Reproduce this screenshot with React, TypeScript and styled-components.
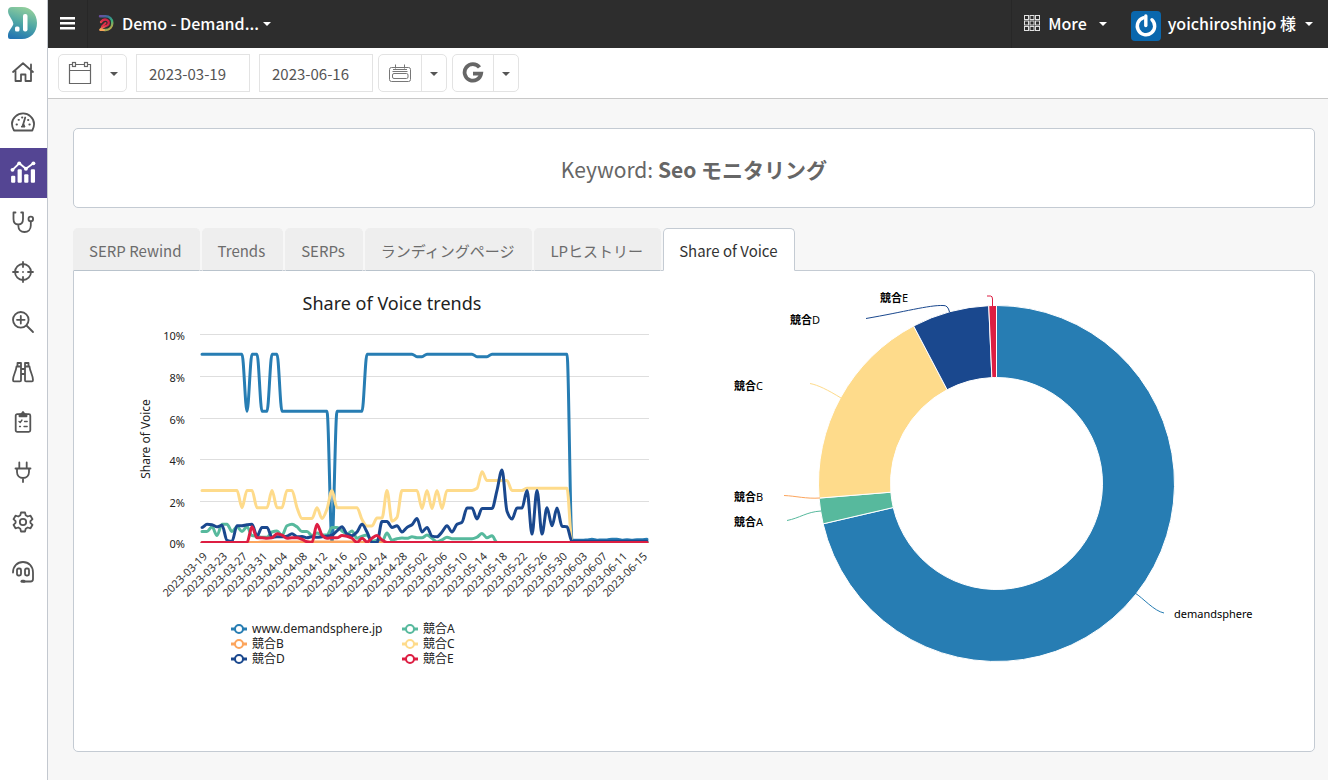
import React from "react";
import styled, { createGlobalStyle } from "styled-components";

const uiFont = `"Noto Sans CJK JP", "Noto Sans", sans-serif`;
const chartFont = `"Noto Sans", "Noto Sans CJK JP", sans-serif`;

const GlobalStyle = createGlobalStyle`
  *, *::before, *::after { box-sizing: border-box; }
  body { margin: 0; background: #f7f7f7; font-family: ${uiFont}; font-size: 15px; line-height: 24px; color: #555; }
  button, input { font: inherit; color: inherit; }
`;

const Page = styled.div`
  display: flex;
  min-height: 100vh;
`;

const Sidebar = styled.nav`
  display: flex;
  flex-direction: column;
  flex: none;
  width: 48px;
  background: #fff;
  border-right: 1px solid #c3c8cf;
`;

const LogoLink = styled.a`
  display: flex;
  height: 48px;
  padding: 7px 8px;
`;

const SideLink = styled.a<{ $active?: boolean }>`
  display: flex;
  align-items: center;
  justify-content: center;
  height: 50px;
  padding: 0 2px 2px 0;
  color: ${(p) => (p.$active ? "#fff" : "#555")};
  background: ${(p) => (p.$active ? "#544593" : "transparent")};
`;

const Main = styled.div`
  flex: 1;
  min-width: 0;
`;

const TopBar = styled.header`
  display: flex;
  align-items: stretch;
  height: 48px;
  background: #2d2d2d;
  color: #fff;
  font-size: 16px;
  font-weight: 500;
`;

const BarButton = styled.button<{ $side?: number; $gap?: number }>`
  display: flex;
  align-items: center;
  gap: ${(p) => p.$gap ?? 8}px;
  padding: 0 ${(p) => p.$side ?? 12}px 2px;
  border: 0;
  background: none;
  white-space: nowrap;
  cursor: pointer;
`;

const MenuButton = styled(BarButton)`
  border-right: 1px solid #272727;
`;

const MoreButton = styled(BarButton)`
  margin-left: auto;
  border-left: 1px solid #272727;
`;

const UserButton = styled(BarButton)`
  padding-right: 15px;

  svg {
    margin-top: 6px;
  }
`;

const Caret = styled.span<{ $space?: number }>`
  margin-top: 2px;
  margin-left: ${(p) => p.$space ?? 0}px;
  border: 4px solid transparent;
  border-top-color: currentColor;
  border-bottom: 0;
`;

const Toolbar = styled.form`
  display: flex;
  align-items: center;
  gap: 9px;
  height: 51px;
  padding: 0 10px;
  background: #fff;
  border-bottom: 1px solid #c8c8c8;
`;

const Groups = styled.div`
  display: flex;
  gap: 5px;
`;

const ButtonGroup = styled.div`
  display: flex;
  height: 38px;
  border: 1px solid #e3e3e3;
  border-radius: 5px;
  background: #fff;
`;

const ToolButton = styled.button<{ $w: number }>`
  display: flex;
  align-items: center;
  justify-content: center;
  width: ${(p) => p.$w}px;
  padding: 0;
  border: 0;
  background: none;
  cursor: pointer;

  & + & {
    border-left: 1px solid #e3e3e3;
  }
`;

const DateInput = styled.input`
  width: 114px;
  height: 38px;
  padding: 0 12px;
  border: 1px solid #e3e3e3;
  background: #fff;
`;

const Content = styled.main`
  padding: 29px 13px 20px 25px;
`;

const KeywordCard = styled.section`
  display: flex;
  align-items: center;
  justify-content: center;
  height: 80px;
  padding-top: 2px;
  margin-bottom: 20px;
  background: #fff;
  border: 1px solid #c4cbd3;
  border-radius: 5px;
`;

const KeywordTitle = styled.h1`
  margin: 0;
  font-size: 21px;
  line-height: 32px;
  font-weight: 400;
  color: #666;
`;

const Tabs = styled.div`
  display: flex;
  gap: 2px;
`;

const Tab = styled.button<{ $active?: boolean }>`
  position: relative;
  height: 43px;
  margin-bottom: -1px;
  padding: 2px 17px 0 15px;
  white-space: nowrap;
  cursor: pointer;
  border: 1px solid ${(p) => (p.$active ? "#c4cbd3" : "#eee")};
  border-bottom-color: ${(p) => (p.$active ? "#fff" : "#b9c3cc")};
  border-radius: 5px 5px 0 0;
  background: ${(p) => (p.$active ? "#fff" : "#eee")};
  color: ${(p) => (p.$active ? "#333" : "#6c6c6c")};
`;

const Panel = styled.section`
  display: flex;
  padding: 15px;
  background: #fff;
  border: 1px solid #c4cbd3;
  border-radius: 0 5px 5px 5px;
`;

const ChartSvg = styled.svg`
  display: block;
  flex: 1;
  min-width: 0;
  height: auto;
  font-family: ${chartFont};
  font-size: 11px;
  fill: #222;
`;

/* ---------- icons ---------- */

const Glyph = ({ size = 24, children }: { size?: number; children: React.ReactNode }) => (
  <svg
    width={size}
    height={size}
    viewBox="0 0 24 24"
    fill="none"
    stroke="currentColor"
    strokeWidth="1.8"
    strokeLinecap="round"
    strokeLinejoin="round"
    aria-hidden="true"
  >
    {children}
  </svg>
);

const LogoMark = () => (
  <svg width="30" height="33" viewBox="0 0 30 33" aria-hidden="true">
    <defs>
      <linearGradient id="logo" x1="0.6" y1="0" x2="0.3" y2="1">
        <stop offset="0" stopColor="#93cf9c" />
        <stop offset="0.5" stopColor="#4fa7a5" />
        <stop offset="1" stopColor="#2375b2" />
      </linearGradient>
    </defs>
    <path
      d="M4 0H14C23 0 29 7 29 16S23 32 14 32H2Q0 32 0 30V28Q0 26 1 24.500L4.500 19Q6 16.500 4.500 14L1 8Q0 6 0 4Q0 0 4 0Z"
      fill="url(#logo)"
    />
    <rect x="15" y="7" width="4.500" height="17.500" rx="2" fill="#fff" />
    <rect x="7" y="19.500" width="4.500" height="5" rx="1.500" fill="#fff" />
  </svg>
);

const BrandMark = () => (
  <svg width="16" height="18" viewBox="0 0 16 18" fill="none" aria-hidden="true">
    <defs>
      <linearGradient id="brandOuter" x1="0" y1="0" x2="0.7" y2="1">
        <stop offset="0" stopColor="#6a4ea0" />
        <stop offset="0.3" stopColor="#3a6f9c" />
        <stop offset="0.65" stopColor="#35b07c" />
        <stop offset="1" stopColor="#b9a84a" />
      </linearGradient>
      <linearGradient id="brandInner" x1="1" y1="0" x2="0" y2="1">
        <stop offset="0" stopColor="#c81f48" />
        <stop offset="0.5" stopColor="#e0304a" />
        <stop offset="1" stopColor="#f6a457" />
      </linearGradient>
    </defs>
    <path d="M2 2.300H7.500C11.500 2.300 14.300 5 14.300 9S11.500 16 7.500 16H6" stroke="url(#brandOuter)" strokeWidth="2.400" strokeLinecap="round" />
    <path d="M3 8C4.500 6 7 5 9 6C11.500 7.200 11.300 10.500 9 11.500C6.500 12.500 4 13 2.500 15.500" stroke="url(#brandInner)" strokeWidth="2.300" strokeLinecap="round" />
    <path d="M7.500 9L4 12.500" stroke="#e0304a" strokeWidth="2" strokeLinecap="round" />
    <path d="M2.300 16H6" stroke="#f6a457" strokeWidth="2" strokeLinecap="round" />
  </svg>
);

const sideIcons: { name: string; active?: boolean; icon: React.ReactNode }[] = [
  {
    name: "Home",
    icon: (
      <Glyph>
        <path d="M2 12L12 3.200L22 12M4.500 11V21H10V14.500H14.500V21H20V11M20 9V4.500" />
      </Glyph>
    ),
  },
  {
    name: "Dashboard",
    icon: (
      <Glyph>
        <path d="M3 20.500C.2 15.500.5 10 4.500 6.300C8.700 2.500 15.500 2.500 19.500 6.300C23.500 10 23.800 15.500 21.300 20.500Z" />
        <path d="M14.200 7.500L12 15" />
        <path d="M12 14.500L10.200 17H14L13 14.500Z" fill="currentColor" strokeWidth="1" />
        <path d="M5.500 14.500H6M7.500 9.800H8M11 7.500H11.400M17 10H17.400M18.300 14.500H18.800" />
      </Glyph>
    ),
  },
  {
    name: "Analytics",
    active: true,
    icon: (
      <Glyph size={26}>
        <path d="M2.300 10L8.500 4L14.700 9L21.600 4" />
        <g fill="currentColor" stroke="none">
          <circle cx="2.300" cy="10" r="1.800" />
          <circle cx="8.500" cy="4" r="1.800" />
          <circle cx="14.700" cy="9" r="1.800" />
          <circle cx="21.600" cy="4" r="1.800" />
          <rect x="1" y="15.500" width="3.900" height="6.500" rx="1" />
          <rect x="7" y="9.500" width="3.900" height="12.500" rx="1" />
          <rect x="13.100" y="14" width="3.900" height="8" rx="1" />
          <rect x="19.200" y="9.500" width="3.900" height="12.500" rx="1" />
        </g>
      </Glyph>
    ),
  },
  {
    name: "Diagnostics",
    icon: (
      <Glyph>
        <path d="M4.500 2.500H2.500V9C2.500 12.500 4.500 14.500 7.300 14.500S12 12.500 12 9V2.500H10.200M7.300 14.500V15.500C7.300 19.500 10 22 13.500 22S19.800 19.500 19.800 15.500V11.500" />
        <circle cx="19.800" cy="9" r="2.300" />
      </Glyph>
    ),
  },
  {
    name: "Targets",
    icon: (
      <Glyph>
        <circle cx="12" cy="12" r="8" />
        <path d="M12 2V7M12 17V22M2 12H7M17 12H22M12 12V12.100" />
      </Glyph>
    ),
  },
  {
    name: "Research",
    icon: (
      <Glyph>
        <circle cx="9.800" cy="9.800" r="7.800" />
        <path d="M15.500 15.500L22 22M9.800 6V13.600M6 9.800H13.600" />
      </Glyph>
    ),
  },
  {
    name: "Discovery",
    icon: (
      <Glyph>
        <path d="M6.500 3H10V20.500Q10 21.300 9 21.300H3Q2 21.300 2 20C2.200 14.500 5 12 5.500 6.500H10M6.500 3V6.500M17.500 3H14V20.500Q14 21.300 15 21.300H21Q22 21.300 22 20C21.800 14.500 19 12 18.500 6.500H14M17.500 3V6.500M10 9H14M10 14H14" />
      </Glyph>
    ),
  },
  {
    name: "Tasks",
    icon: (
      <Glyph>
        <rect x="4.700" y="4.200" width="14.600" height="17.600" rx="1.500" />
        <path d="M8.500 4.500V6.300H15.500V4.500L13.500 4L12 2L10.500 4Z" fill="currentColor" />
        <path d="M8 11.500L9.200 12.500L11 10M13.500 11.500H16.200M13 16.500H16.200M8.500 16.500H9.500" strokeWidth="1.300" />
      </Glyph>
    ),
  },
  {
    name: "Integrations",
    icon: (
      <Glyph>
        <path d="M8.300 2.500V7.500M15.700 2.500V7.500M4.500 8.500H19.500M6 9V12C6 15.500 8.500 18 12 18S18 15.500 18 12V9M12 18V22" />
      </Glyph>
    ),
  },
  {
    name: "Settings",
    icon: (
      <Glyph>
        <path d="M10 2.500H14L14.700 5.300L16.700 6.500L19.500 5.700L21.500 9.200L19.400 11.200V12.800L21.500 14.800L19.500 18.300L16.700 17.500L14.700 18.700L14 21.500H10L9.300 18.700L7.300 17.500L4.500 18.300L2.500 14.800L4.600 12.800V11.200L2.500 9.200L4.500 5.700L7.300 6.500L9.300 5.300Z" />
        <circle cx="12" cy="12" r="3.200" />
      </Glyph>
    ),
  },
  {
    name: "Support",
    icon: (
      <Glyph>
        <path d="M2 12.500C2 6 6.300 2 12 2S22 6 22 12.500V19Q22 21.500 19.500 21.500H12.500" />
        <rect x="6" y="8.500" width="4" height="7" rx="1.500" />
        <rect x="14" y="8.500" width="4" height="7" rx="1.500" />
        <path d="M11 21.300H13" strokeWidth="3" />
      </Glyph>
    ),
  },
];

const CalendarIcon = () => (
  <svg width="24" height="24" viewBox="0 0 24 24" fill="none" stroke="#666" strokeWidth="1.200" aria-hidden="true">
    <path d="M4.500 3.500H1.500V22.500H22.500V3.500H19.500M8 3.500H16M1.500 9.500H22.500" />
    <rect x="4.500" y="1.500" width="3" height="4" />
    <rect x="16.500" y="1.500" width="3" height="4" />
  </svg>
);

const RangeIcon = () => (
  <svg width="24" height="20" viewBox="0 0 24 20" fill="none" stroke="#777" aria-hidden="true">
    <rect x="1.500" y="4.500" width="21" height="14" rx="2" />
    <rect x="4.500" y="10.500" width="15.500" height="5" rx="1.500" />
    <path d="M7.500 1.500V5.500M16.500 1.500V5.500M5 6.500H19M4.500 8.500H19.500" />
  </svg>
);

const GoogleIcon = () => (
  <svg width="22" height="22" viewBox="0 0 22 22" fill="none" stroke="#666" strokeWidth="3.800" aria-hidden="true">
    <path d="M17.500 5.300A8.300 8.300 0 1 0 19.100 11.700H11" />
  </svg>
);

const Burger = () => (
  <svg width="15" height="13" viewBox="0 0 15 13" fill="currentColor" aria-hidden="true">
    <path d="M0 0H15V2.500H0ZM0 5H15V7.500H0ZM0 10H15V12.500H0Z" />
  </svg>
);

const AppsIcon = () => (
  <svg width="16" height="16" viewBox="0 0 16 16" fill="none" stroke="#e0e0e0" aria-hidden="true">
    {[0, 1, 2].map((r) =>
      [0, 1, 2].map((c) => <rect key={`${r}${c}`} x={0.5 + c * 5.5} y={0.5 + r * 5.5} width="4" height="4" />)
    )}
  </svg>
);

const Avatar = () => (
  <svg width="30" height="30" viewBox="0 0 30 30" fill="none" aria-hidden="true">
    <rect width="30" height="30" rx="4" fill="#0a67ad" />
    <path d="M10.500 7.600A8.700 8.700 0 1 0 19.500 7.600" transform="rotate(12 15 15)" stroke="#fff" strokeWidth="3.400" strokeLinecap="round" />
    <path d="M14.800 5V14.500" stroke="#fff" strokeWidth="3.400" strokeLinecap="round" />
  </svg>
);

/* ---------- line chart ---------- */

const fill = (n: number, v: number) => Array<number>(n).fill(v);

const colors = {
  main: "#277db3",
  a: "#57b99d",
  b: "#fca55d",
  c: "#fedb8b",
  d: "#1a488e",
  e: "#dd1e42",
};

// Daily share in percent, 2023-03-19 to 2023-06-16
const series = [
  {
    name: "www.demandsphere.jp",
    color: colors.main,
    values: [
      ...fill(9, 9.05), 6.3, 9.05, 9.05, 6.3, 6.3, 9.05, 9.05, ...fill(10, 6.3), 0, ...fill(6, 6.3),
      ...fill(10, 9.05), 8.93, 8.93, ...fill(10, 9.05), 8.93, 8.93, 8.93, ...fill(16, 9.05),
      0.1, 0.1, 0.1, 0.12, 0.15, 0.1, 0.12, 0.12, 0.15, 0.15, 0.1, 0.13, 0.1, 0.13, 0.13, 0.15,
    ],
  },
  {
    name: "競合A",
    color: colors.a,
    values: [
      0.52, 0.52, 0.75, 0.33, 0.87, 0.87, 0.52, 0.75, 0.52, 0.75, 0.33, 0.3, 0.25, 0.25, 0.5, 0.55, 0.33, 0.8, 0.87,
      0.75, 0.52, 0.52, 0.33, 0.45, 0.35, 0.35, 0.72, 0.72, 0.55, 0.4, 0.55, 0.2, 0.3, 0.35, 0.05, 0.1, 0.05, 0.45,
      0.1, 0.18, 0.21, 0.2, 0.27, 0.22, 0.22, 0.35, 0.2, 0.02, 0.12, 0.25, 0.18, 0.18, 0.18, 0.18, 0.18, 0.25, 0.43,
      0.22, 0.32, ...fill(31, 0),
    ],
  },
  { name: "競合B", color: colors.b, values: [...fill(12, 0), ...fill(20, 0.02), ...fill(58, 0)] },
  {
    name: "競合C",
    color: colors.c,
    values: [
      ...fill(8, 2.5), 1.67, 2.5, 2.5, 1.67, 1.67, 1.67, 2.5, 1.67, 1.67, 2.5, 2.5, 1.67, 1.15, 1.15, 1.15, 1.67,
      1.15, 1.6, 2.5, ...fill(5, 1.67), 1.1, 0.79, 0.79, 1.17, 1.17, 2.5, 1.02, 1.2, ...fill(4, 2.5), 1.63, 2.5,
      1.63, 2.5, 1.63, ...fill(6, 2.5), 2.6, 3.4, ...fill(5, 2.97), 2.5, 2.5, 2.5, ...fill(9, 2.6), ...fill(16, 0),
    ],
  },
  {
    name: "競合D",
    color: colors.d,
    values: [
      0.72, 0.87, 0.85, 0.75, 0.82, 0.1, 0.05, 0.8, 0.8, 0.85, 0.87, 0.3, 0.72, 0.72, 0.25, 0.27, 0.27, 0.3, 0.42,
      0.27, 0.28, 0.22, 0.27, 0.25, 0.27, 0.3, 0.35, 0.55, 0.75, 0.4, 0.32, 0.5, 0.87, 0.5, 0, 0, 1, 1, 0.72, 0.8,
      0.5, 0.72, 0.85, 1.15, 0.5, 0.72, 0.3, 0.27, 0.5, 0.8, 0.5, 0.87, 0.97, 1.65, 1.65, 1.13, 1.63, 1.63, 1.63,
      2.5, 3.48, 1.5, 1.12, 1.65, 1.65, 2.5, 0.4, 2.5, 0.4, 1.67, 0.8, 1.65, 0.78, 0.75, 0.04, ...fill(15, 0.06),
    ],
  },
  {
    name: "競合E",
    color: colors.e,
    values: [
      ...fill(10, 0), 0.75, 0.22, 0.22, 0.2, 0.22, 0.42, 0.35, 0.2, 0.22, 0.22, 0.15, 0.03, 0, 0.87, 0.35, 0.2, 0.22,
      0.22, 0.33, 0.3, 0.2, 0, 0.2, 0.02, 0.2, 0.33, 0.12, ...fill(53, 0),
    ],
  },
];

const plot = { left: 111, right: 560, zeroY: 256.4, perPercent: 20.8, firstX: 113, stepX: 5 };

/** Monotone cubic path, so that curves never overshoot the daily values. */
const splinePath = (values: number[]) => {
  const h = plot.stepX;
  const pts = values.map((v, i) => [plot.firstX + i * h, plot.zeroY - v * plot.perPercent]);
  const slope = (i: number) => (pts[i + 1][1] - pts[i][1]) / h;
  const tangent = pts.map((_, i) => {
    if (i === 0 || i === pts.length - 1) return 0;
    const a = slope(i - 1);
    const b = slope(i);
    return a * b <= 0 ? 0 : (2 * a * b) / (a + b);
  });
  return pts
    .map(([x, y], i) => {
      if (i === 0) return `M${x} ${y}`;
      const [px, py] = pts[i - 1];
      const c = h / 3;
      return `C${px + c} ${(py + tangent[i - 1] * c).toFixed(2)} ${x - c} ${(y - tangent[i] * c).toFixed(2)} ${x} ${y.toFixed(2)}`;
    })
    .join("");
};

const dateLabels = Array.from({ length: 23 }, (_, i) =>
  new Date(Date.UTC(2023, 2, 19 + i * 4)).toISOString().slice(0, 10)
);

const TrendChart = () => (
  <ChartSvg viewBox="0 0 605 450" role="img" aria-label="Share of Voice trends">
    <text x="303" y="24" textAnchor="middle" fontSize="18">
      Share of Voice trends
    </text>
    <text transform="translate(61 153) rotate(-90)" textAnchor="middle" fontSize="12">
      Share of Voice
    </text>
    {[0, 2, 4, 6, 8, 10].map((p) => {
      const y = Math.round(plot.zeroY - p * plot.perPercent) + 0.5;
      return (
        <g key={p}>
          <path d={`M${plot.left} ${y}H${plot.right}`} stroke={p ? "#dedede" : "#c0d0e0"} />
          <text x="96" y={y + 5} textAnchor="end">
            {p}%
          </text>
        </g>
      );
    })}
    <clipPath id="plotArea">
      <rect x={plot.left} y="40" width={plot.right - plot.left} height="217" />
    </clipPath>
    <g clipPath="url(#plotArea)" fill="none" strokeWidth="3" strokeLinejoin="round" strokeLinecap="round">
      {series.map((s) => (
        <path key={s.name} d={splinePath(s.values)} stroke={s.color} />
      ))}
    </g>
    {dateLabels.map((label, i) => (
      <text key={label} transform={`translate(${119 + i * 20} 271) rotate(-45)`} textAnchor="end" fill="#333">
        {label}
      </text>
    ))}
    {series.map((s, i) => (
      <g key={s.name} transform={`translate(${142 + (i % 2) * 171} ${343 + Math.floor(i / 2) * 15})`}>
        <path d="M0 0H16" stroke={s.color} strokeWidth="3" />
        <circle cx="8" cy="0" r="4" fill="#fff" stroke={s.color} strokeWidth="2" />
        <text x="21" y="4" fontSize="12">
          {s.name}
        </text>
      </g>
    ))}
  </ChartSvg>
);

/* ---------- doughnut chart ---------- */

const center = { x: 302.5, y: 197.5 };

const point = (r: number, deg: number) => {
  const t = (deg * Math.PI) / 180;
  return `${(center.x + r * Math.sin(t)).toFixed(2)} ${(center.y - r * Math.cos(t)).toFixed(2)}`;
};

const ringPath = (from: number, to: number) => {
  const large = to - from > 180 ? 1 : 0;
  return `M${point(178, from)}A178 178 0 ${large} 1 ${point(178, to)}L${point(106, to)}A106 106 0 ${large} 0 ${point(106, from)}Z`;
};

const slices = [
  { color: colors.main, from: 0, to: 256.9 },
  { color: colors.a, from: 256.9, to: 265.3 },
  { color: colors.c, from: 265.3, to: 332.25 },
  { color: colors.d, from: 332.25, to: 357.5 },
  { color: colors.e, from: 357.5, to: 360 },
];

const callouts = [
  { letter: "E", x: 186, y: 16, color: colors.e, line: "M293 10H296.500Q298.500 10 298.500 13V20" },
  { letter: "D", x: 96, y: 38, color: colors.d, line: "M172 32.500C210 26 235 19 249 19.500Q254 19 255.500 26" },
  { letter: "C", x: 40, y: 104, color: colors.c, line: "M116 97.500C124 99 134 104 147 112" },
  { letter: "B", x: 40, y: 215, color: colors.b, line: "M90 209.500C102 210 112 213 126 212" },
  { letter: "A", x: 40, y: 240, color: colors.a, line: "M93 234.500C106 232 112 226 127 225" },
];

const ShareChart = () => (
  <ChartSvg viewBox="0 0 605 450" role="img" aria-label="Share of Voice by site">
    {slices.map((s) => (
      <path key={s.color} d={ringPath(s.from, s.to)} fill={s.color} stroke="#fff" />
    ))}
    {callouts.map((c) => (
      <g key={c.letter}>
        <path d={c.line} fill="none" stroke={c.color} />
        <text x={c.x} y={c.y} fill="#000">
          <tspan fontWeight="700">競合</tspan>
          {c.letter}
        </text>
      </g>
    ))}
    <path d="M441 307C449 312 460 325 470 327" fill="none" stroke={colors.main} />
    <text x="480" y="332" fill="#000">
      demandsphere
    </text>
  </ChartSvg>
);

/* ---------- page ---------- */

const tabs = ["SERP Rewind", "Trends", "SERPs", "ランディングページ", "LPヒストリー", "Share of Voice"];

const SplitButton = ({ label, main, more, children }: { label: string; main: number; more: number; children: React.ReactNode }) => (
  <ButtonGroup>
    <ToolButton type="button" $w={main} aria-label={label}>
      {children}
    </ToolButton>
    <ToolButton type="button" $w={more} aria-label={`${label} options`}>
      <Caret />
    </ToolButton>
  </ButtonGroup>
);

export default function App() {
  return (
    <Page>
      <GlobalStyle />
      <Sidebar>
        <LogoLink href="#" aria-label="DemandSphere">
          <LogoMark />
        </LogoLink>
        {sideIcons.map((item) => (
          <SideLink key={item.name} href="#" aria-label={item.name} $active={item.active}>
            {item.icon}
          </SideLink>
        ))}
      </Sidebar>
      <Main>
        <TopBar>
          <MenuButton type="button" aria-label="Menu">
            <Burger />
          </MenuButton>
          <BarButton type="button" $side={10}>
            <BrandMark />
            Demo - Demand...
            <Caret $space={-4} />
          </BarButton>
          <MoreButton type="button">
            <AppsIcon />
            More
            <Caret $space={4} />
          </MoreButton>
          <UserButton type="button" $gap={7}>
            <Avatar />
            yoichiroshinjo 様
            <Caret $space={2} />
          </UserButton>
        </TopBar>
        <Toolbar>
          <SplitButton label="Calendar" main={42} more={25}>
            <CalendarIcon />
          </SplitButton>
          <DateInput type="text" aria-label="Start date" defaultValue="2023-03-19" />
          <Groups>
            <DateInput type="text" aria-label="End date" defaultValue="2023-06-16" />
            <SplitButton label="Date range" main={42} more={25}>
              <RangeIcon />
            </SplitButton>
            <SplitButton label="Search engine" main={40} more={25}>
              <GoogleIcon />
            </SplitButton>
          </Groups>
        </Toolbar>
        <Content>
          <KeywordCard>
            <KeywordTitle>
              Keyword: <strong>Seo モニタリング</strong>
            </KeywordTitle>
          </KeywordCard>
          <Tabs role="tablist">
            {tabs.map((name, i) => (
              <Tab key={name} type="button" role="tab" aria-selected={i === 5} $active={i === 5}>
                {name}
              </Tab>
            ))}
          </Tabs>
          <Panel>
            <TrendChart />
            <ShareChart />
          </Panel>
        </Content>
      </Main>
    </Page>
  );
}
